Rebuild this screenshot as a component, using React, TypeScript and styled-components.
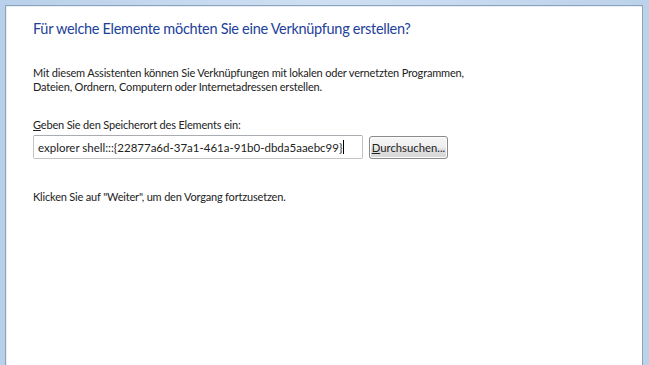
import React from "react";
import styled, { createGlobalStyle } from "styled-components";

const Global = createGlobalStyle`
  html, body { margin: 0; padding: 0; background: #c3d7ee; }
  #root { height: 365px; }
`;

const Frame = styled.div`
  height: 365px;
  box-sizing: border-box;
  padding: 5px 6px 0 5px;
  background: linear-gradient(90deg, #b9d0ea 0%, #cfe0f3 50%, #bcd2eb 100%);
  display: flex;
  overflow: hidden;
`;

const Panel = styled.div`
  flex: 1;
  background: #ffffff;
  border: 1px solid #8fa3b8;
  border-bottom: none;
  box-shadow: inset 1px 1px 0 #e6eef7;
  padding: 13px 0 0 27px;
  font-family: Lato, "Noto Sans", sans-serif;
  color: #1e1e1e;
  display: flex;
  flex-direction: column;
`;

const Title = styled.h1`
  margin: 0;
  font-size: 14.5px;
  letter-spacing: -0.3px;
  font-weight: 400;
  color: #22419a;
  line-height: 20px;
`;

const Paragraph = styled.p<{ $top: number }>`
  margin: ${(p) => p.$top}px 0 0 0;
  font-size: 11px;
  letter-spacing: -0.18px;
  line-height: 14px;
  color: #222;
`;

const Label = styled.label`
  display: block;
  margin-top: 24px;
  font-size: 11px;
  letter-spacing: -0.18px;
  line-height: 14px;
  color: #222;
  & u { text-decoration: underline; }
`;

const Row = styled.div`
  display: flex;
  align-items: center;
  gap: 6px;
  margin-top: 3px;
`;

const Input = styled.div`
  width: 330px;
  height: 24px;
  box-sizing: border-box;
  border: 1px solid #c2c5c8;
  border-top-color: #a9acb1;
  border-radius: 2px;
  padding: 0 4px;
  font-size: 11.5px;
  color: #222;
  display: flex;
  align-items: center;
  white-space: nowrap;
`;

const Caret = styled.span`
  display: inline-block;
  width: 1px;
  height: 14px;
  background: #000;
  margin-left: 1px;
`;

const Button = styled.button`
  width: 79px;
  height: 23px;
  box-sizing: border-box;
  border: 1px solid #8a8a8a;
  border-radius: 3px;
  background: linear-gradient(#f6f6f6 0%, #eeeeee 50%, #e2e2e2 51%, #d6d6d6 100%);
  box-shadow: inset 0 0 0 1px #fcfcfc;
  font-family: inherit;
  font-size: 11.3px;
  color: #222;
  padding: 0;
  & u { text-decoration: underline; }
`;

export default function App() {
  return (
    <>
      <Global />
      <Frame>
        <Panel>
          <Title>Für welche Elemente möchten Sie eine Verknüpfung erstellen?</Title>
          <Paragraph $top={27}>
            Mit diesem Assistenten können Sie Verknüpfungen mit lokalen oder vernetzten Programmen,
            <br />
            Dateien, Ordnern, Computern oder Internetadressen erstellen.
          </Paragraph>
          <Label>
            <u>G</u>eben Sie den Speicherort des Elements ein:
          </Label>
          <Row>
            <Input>
              explorer shell:::{"{22877a6d-37a1-461a-91b0-dbda5aaebc99}"}
              <Caret />
            </Input>
            <Button>
              <u>D</u>urchsuchen...
            </Button>
          </Row>
          <Paragraph $top={31}>Klicken Sie auf "Weiter", um den Vorgang fortzusetzen.</Paragraph>
        </Panel>
      </Frame>
    </>
  );
}
